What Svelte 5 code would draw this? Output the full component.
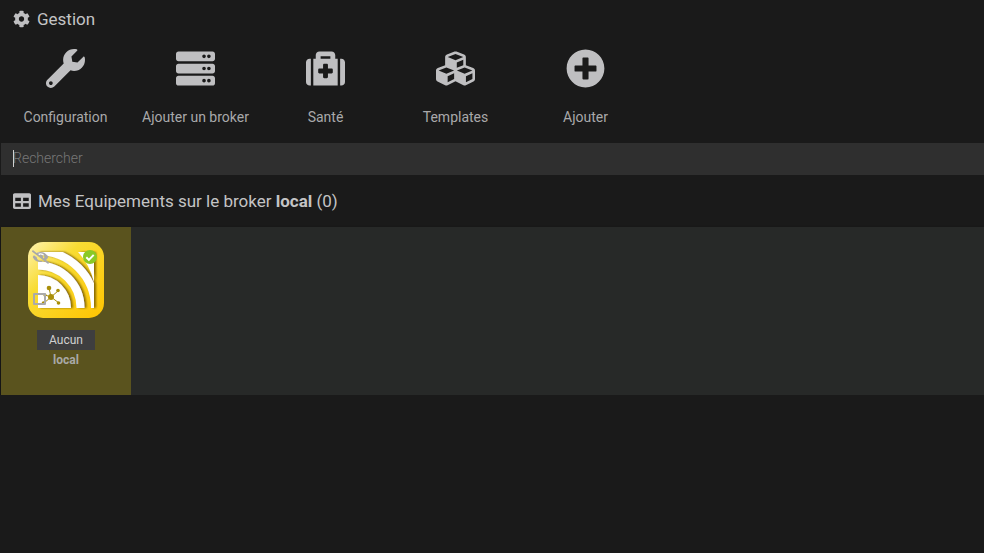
<script lang="ts">
  type Action = { label: string; path: string };

  const cog =
    "M487.4 315.7l-42.6-24.6c4.3-23.2 4.3-47 0-70.2l42.6-24.6c4.9-2.8 7.1-8.6 5.5-14-11.1-35.6-30-67.8-54.7-94.6-3.8-4.1-10-5.1-14.8-2.3L380.8 110c-17.9-15.4-38.5-27.3-60.8-35.1V25.8c0-5.6-3.9-10.5-9.4-11.7-36.7-8.2-74.3-7.8-109.2 0-5.5 1.2-9.4 6.1-9.4 11.7V75c-22.2 7.9-42.8 19.8-60.8 35.1L88.7 85.5c-4.9-2.8-11-1.9-14.8 2.3-24.7 26.7-43.6 58.9-54.7 94.6-1.7 5.4.6 11.2 5.5 14L67.3 221c-4.3 23.2-4.3 47 0 70.2l-42.6 24.6c-4.9 2.8-7.1 8.6-5.5 14 11.1 35.6 30 67.8 54.7 94.6 3.8 4.1 10 5.1 14.8 2.3l42.6-24.6c17.9 15.4 38.5 27.3 60.8 35.1v49.2c0 5.6 3.9 10.5 9.4 11.7 36.7 8.2 74.3 7.8 109.2 0 5.5-1.2 9.4-6.1 9.4-11.7v-49.2c22.2-7.9 42.8-19.8 60.8-35.1l42.6 24.6c4.9 2.8 11 1.9 14.8-2.3 24.7-26.7 43.6-58.9 54.7-94.6 1.5-5.5-.7-11.3-5.6-14.1zM256 336c-44.1 0-80-35.9-80-80s35.9-80 80-80 80 35.9 80 80-35.9 80-80 80z";
  const table =
    "M464 32H48C21.49 32 0 53.49 0 80v352c0 26.51 21.49 48 48 48h416c26.51 0 48-21.49 48-48V80c0-26.51-21.49-48-48-48zM224 416H64v-96h160v96zm0-160H64v-96h160v96zm224 160H288v-96h160v96zm0-160H288v-96h160v96z";
  const eyeSlash =
    "M320 400c-75.85 0-137.25-58.71-142.9-133.11L72.2 185.82c-13.79 17.3-26.48 35.59-36.72 55.59a32.35 32.35 0 0 0 0 29.19C89.71 376.41 197.07 448 320 448c26.91 0 52.87-4 77.89-10.46L346 397.39a144.13 144.13 0 0 1-26 2.61zm313.82 58.1l-110.55-85.44a331.25 331.25 0 0 0 81.25-102.07 32.35 32.35 0 0 0 0-29.19C550.29 135.59 442.93 64 320 64a308.15 308.15 0 0 0-147.32 37.7L45.46 3.37A16 16 0 0 0 23 6.18L3.37 31.45A16 16 0 0 0 6.18 53.9l588.36 454.73a16 16 0 0 0 22.46-2.81l19.64-25.27a16 16 0 0 0-2.82-22.45zm-183.72-142l-39.3-30.38A94.75 94.75 0 0 0 416 256a94.76 94.76 0 0 0-121.31-92.21A47.65 47.65 0 0 1 304 192a46.64 46.64 0 0 1-1.54 10l-73.61-56.89A142.31 142.31 0 0 1 320 112a143.92 143.92 0 0 1 144 144c0 21.63-5.29 41.79-13.9 60.11z";

  const serverUnit = (y: number) =>
    `M480 ${y + 128}H32c-17.7 0-32-14.3-32-32v-64c0-17.7 14.3-32 32-32h448c17.7 0 32 14.3 32 32v64c0 17.7-14.3 32-32 32z` +
    `M432 ${y + 40}a24 24 0 1 0 0 48 24 24 0 0 0 0-48zM368 ${y + 40}a24 24 0 1 0 0 48 24 24 0 0 0 0-48z`;

  const actions: Action[] = [
    {
      label: "Configuration",
      path: "M507.73 109.1c-2.24-9.03-13.54-12.09-20.12-5.51l-74.36 74.36-67.88-11.31-11.31-67.88 74.36-74.36c6.62-6.62 3.43-17.9-5.66-20.16-47.38-11.74-99.55.91-136.58 37.93-39.64 39.64-50.55 97.1-34.05 147.2L18.74 402.76c-24.99 24.99-24.99 65.51 0 90.5 24.99 24.99 65.51 24.99 90.5 0l213.21-213.21c50.12 16.71 107.47 5.68 147.37-34.22 37.07-37.07 49.7-89.32 37.91-136.73zM64 472c-13.25 0-24-10.75-24-24 0-13.26 10.75-24 24-24s24 10.74 24 24c0 13.25-10.75 24-24 24z",
    },
    {
      label: "Ajouter un broker",
      path: serverUnit(32) + serverUnit(192) + serverUnit(352),
    },
    {
      label: "Santé",
      path: "M96 480h320V128h-32V80c0-26.51-21.49-48-48-48H176c-26.51 0-48 21.49-48 48v48H96v352zm96-384h128v32H192V96zm320 80v256c0 26.51-21.49 48-48 48h-16V128h16c26.51 0 48 21.49 48 48zM64 480H48c-26.51 0-48-21.49-48-48V176c0-26.51 21.49-48 48-48h16v352zm288-208v32c0 8.837-7.163 16-16 16h-48v48c0 8.837-7.163 16-16 16h-32c-8.837 0-16-7.163-16-16v-48h-48c-8.837 0-16-7.163-16-16v-32c0-8.837 7.163-16 16-16h48v-48c0-8.837 7.163-16 16-16h32c8.837 0 16 7.163 16 16v48h48c8.837 0 16 7.163 16 16z",
    },
    {
      label: "Templates",
      path: "M488.6 250.2L392 214V105.5c0-15-9.3-28.4-23.4-33.7l-100-37.5c-8.1-3.1-17.1-3.1-25.3 0l-100 37.5c-14.1 5.3-23.4 18.7-23.4 33.7V214l-96.6 36.2C9.3 255.5 0 268.9 0 283.9V394c0 13.6 7.7 26.1 19.9 32.2l100 50c10.1 5.1 22.1 5.1 32.2 0l103.9-52 103.9 52c10.1 5.1 22.1 5.1 32.2 0l100-50c12.2-6.1 19.9-18.6 19.9-32.2V283.9c0-15-9.3-28.4-23.4-33.7zM358 214.8l-85 31.9v-68.2l85-37v73.3zM154 104.1l102-38.2 102 38.2v.6l-102 41.4-102-41.4v-.6zm84 291.1l-85 42.5v-79.1l85-38.8v75.4zm0-112l-102 41.4-102-41.4v-.6l102-38.2 102 38.2v.6zm240 112l-85 42.5v-79.1l85-38.8v75.4zm0-112l-102 41.4-102-41.4v-.6l102-38.2 102 38.2v.6z",
    },
    {
      label: "Ajouter",
      path: "M256 8C119 8 8 119 8 256s111 248 248 248 248-111 248-248S393 8 256 8zm144 276c0 6.6-5.4 12-12 12h-92v92c0 6.6-5.4 12-12 12h-56c-6.6 0-12-5.4-12-12v-92h-92c-6.6 0-12-5.4-12-12v-56c0-6.6 5.4-12 12-12h92v-92c0-6.6 5.4-12 12-12h56c6.6 0 12 5.4 12 12v92h92c6.6 0 12 5.4 12 12v56z",
    },
  ];

  let search = $state("");
  let selected = $state(false);
</script>

<main>
  <h1>
    <svg class="icon" viewBox="0 0 512 512" aria-hidden="true"><path d={cog} /></svg>
    Gestion
  </h1>

  <nav>
    {#each actions as action}
      <button type="button">
        <svg viewBox="0 0 512 512" aria-hidden="true"><path d={action.path} fill-rule="evenodd" /></svg>
        <span>{action.label}</span>
      </button>
    {/each}
  </nav>

  <div class="search">
    <input type="text" placeholder="Rechercher" aria-label="Rechercher" bind:value={search} />
    {#if !search}
      <i class="caret"></i>
    {/if}
  </div>

  <h2>
    <svg class="icon" viewBox="0 0 512 512" aria-hidden="true"><path d={table} /></svg>
    <span>Mes Equipements sur le broker <strong>local</strong> (0)</span>
  </h2>

  <section>
    <article>
      <div class="logo">
        <svg viewBox="0 0 76 76" aria-hidden="true">
          <defs>
            <linearGradient id="gold" x1="0" y1="0" x2="1" y2="1">
              <stop offset="0" stop-color="#fff3b0" />
              <stop offset="0.35" stop-color="#f8dc34" />
              <stop offset="1" stop-color="#ffc400" />
            </linearGradient>
            <clipPath id="frame"><rect x="10" y="10" width="56" height="56" /></clipPath>
            <filter id="shade" x="-10%" y="-10%" width="130%" height="130%">
              <feDropShadow dx="2" dy="0" stdDeviation="1.3" flood-color="#806400" flood-opacity="0.95" />
            </filter>
          </defs>
          <rect width="76" height="76" rx="15" fill="url(#gold)" />
          <g filter="url(#shade)">
            <g clip-path="url(#frame)">
              <path d="M10 66V33a33 33 0 0 1 33 33z" fill="#fff" />
              <g fill="none" stroke="#fff">
                <circle cx="10" cy="66" r="42.5" stroke-width="8" />
                <circle cx="10" cy="66" r="57" stroke-width="8" />
              </g>
              <path d="M50 10h16v30A69 69 0 0 0 50 10z" fill="#fff" />
            </g>
          </g>
          <g fill="#a98f0a" stroke="#a98f0a">
            <path d="M23 55l-2-9M23 55l7-6M23 55l8 6M23 55l-7 6M23 55l-6-2" />
            <g stroke="none">
              <circle cx="23" cy="55" r="3" />
              <circle cx="21" cy="46" r="2.3" />
              <circle cx="30" cy="48.5" r="1.8" />
              <circle cx="30.5" cy="61" r="1.8" />
              <circle cx="15.5" cy="61" r="1.8" />
              <circle cx="17" cy="53" r="1.6" />
            </g>
          </g>
        </svg>
        <svg class="hidden-mark" viewBox="0 0 640 512" aria-hidden="true"><path d={eyeSlash} /></svg>
        <svg class="active-mark" viewBox="0 0 14 14" aria-hidden="true">
          <circle cx="7" cy="7" r="7" />
          <path d="M3.3 7.3l2.6 2.6 4.8-5" />
        </svg>
        <input type="checkbox" aria-label="local" bind:checked={selected} />
      </div>
      <span class="badge">Aucun</span>
      <strong>local</strong>
    </article>
  </section>
</main>

<style>
  :global(body) {
    background-color: #1a1a1a;
  }
  main {
    padding-left: 1px;
    color: #c4c4c5;
    font-family: Roboto, sans-serif;
    font-size: 14px;
  }
  svg {
    fill: #bfbfc1;
  }
  h1,
  h2 {
    display: flex;
    align-items: center;
    gap: 7px;
    margin: 0;
    padding: 0 12px;
    font-size: 17px;
    font-weight: 400;
  }
  h1 {
    height: 38px;
  }
  h2 {
    height: 52px;
  }
  .icon {
    width: 18px;
    height: 18px;
  }
  h1 .icon {
    width: 17px;
  }
  nav {
    display: flex;
    flex-wrap: wrap;
    min-height: 105px;
  }
  button {
    display: flex;
    flex-direction: column;
    align-items: center;
    gap: 20px;
    width: 130px;
    padding: 11px 1px 0 0;
    border: 0;
    background: none;
    color: #a9a9aa;
    font: inherit;
    line-height: 18px;
    cursor: pointer;
  }
  button svg {
    width: 39px;
    height: 39px;
  }
  .search {
    position: relative;
    background-color: #2f2f2f;
  }
  .search input {
    display: block;
    box-sizing: border-box;
    width: 100%;
    height: 32px;
    padding: 0 12px 2px;
    border: 0;
    outline: 0;
    background: none;
    color: #c4c4c5;
    font: inherit;
    font-weight: 300;
  }
  .search input::placeholder {
    color: #777;
  }
  .caret {
    position: absolute;
    top: 7px;
    left: 12px;
    width: 1px;
    height: 17px;
    background-color: #d0d0d0;
  }
  section {
    display: flex;
    flex-wrap: wrap;
    background-color: #272928;
    box-shadow: 0 2px 3px #0e0e0e;
  }
  article {
    display: flex;
    flex-direction: column;
    align-items: center;
    box-sizing: border-box;
    width: 130px;
    min-height: 168px;
    padding-top: 15px;
    background-color: #5a531e;
    font-size: 12px;
    line-height: 20px;
  }
  article > strong {
    color: #a9a9a6;
  }
  .logo {
    position: relative;
    width: 76px;
    height: 76px;
    margin-bottom: 12px;
  }
  .badge {
    padding: 0 12px;
    background-color: #3e3e3f;
    color: #d0d0d0;
  }
  .hidden-mark,
  .active-mark,
  .logo input {
    position: absolute;
  }
  .hidden-mark {
    top: 8px;
    left: 4px;
    width: 17px;
    height: 14px;
    fill: #a9a9a9;
  }
  .active-mark {
    top: 8px;
    right: 7px;
    width: 14px;
    height: 14px;
    fill: #8ac926;
  }
  .active-mark path {
    fill: none;
    stroke: #fff;
    stroke-width: 2;
  }
  .logo input {
    bottom: 13px;
    left: 5px;
    width: 13px;
    height: 12px;
    margin: 0;
    border: 2px solid #aaa;
    border-radius: 1px;
    appearance: none;
  }
  .logo input:checked {
    background-color: #8ac926;
  }
</style>
